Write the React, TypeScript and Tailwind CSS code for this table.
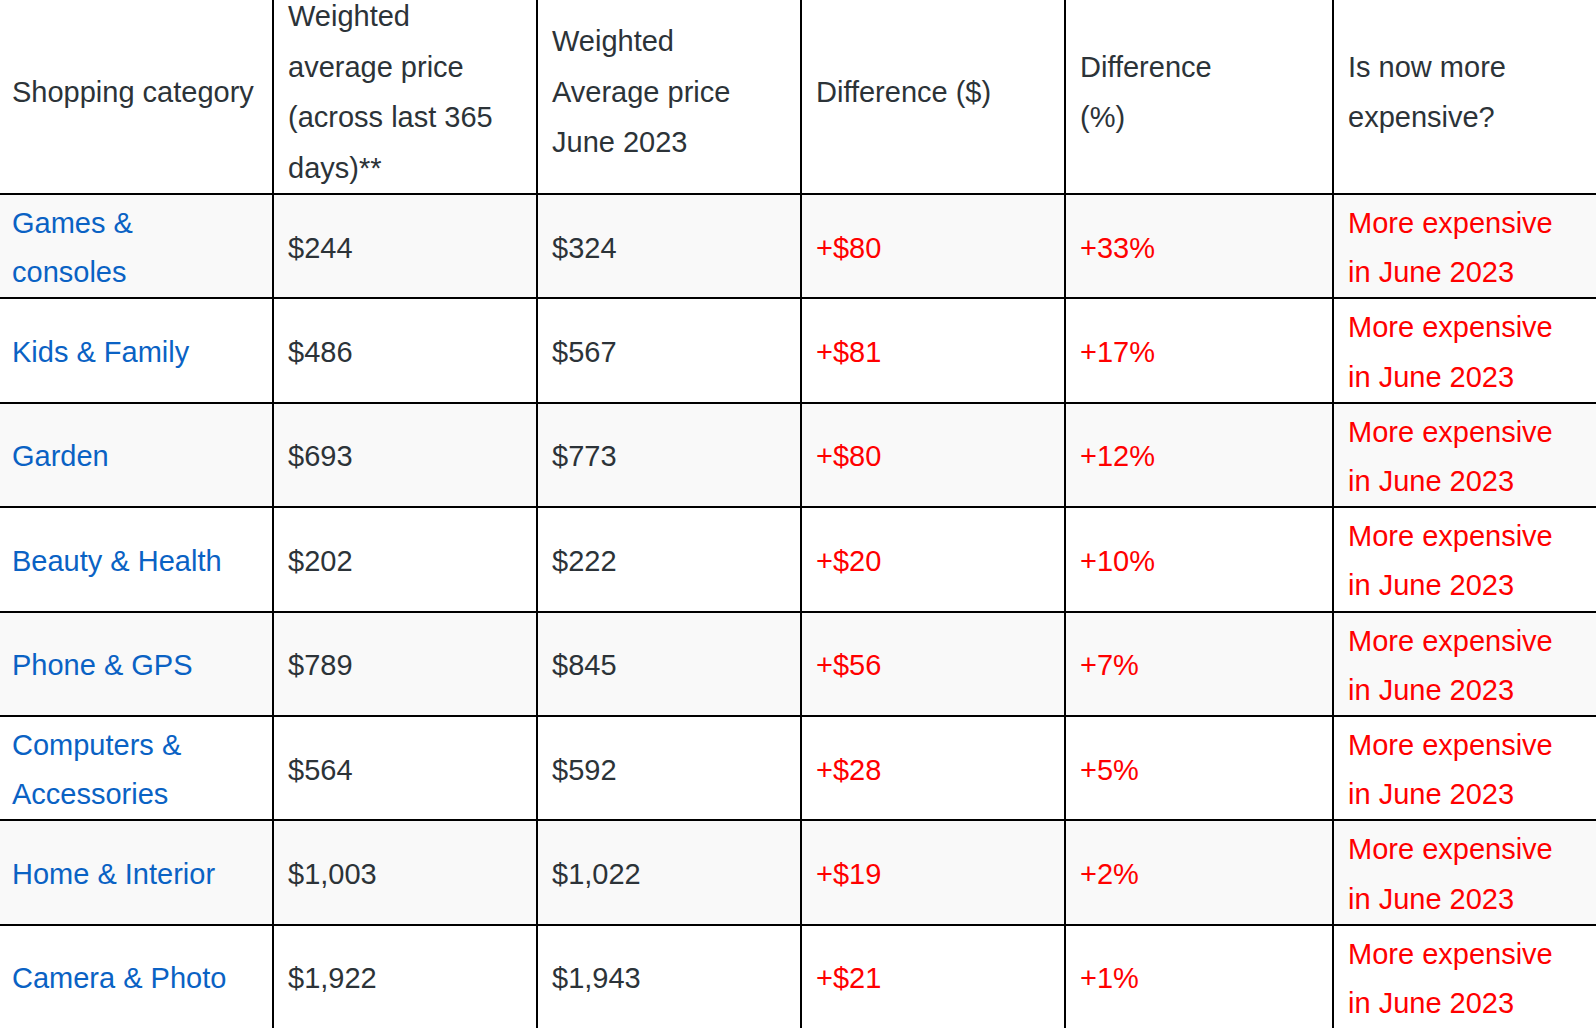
import React from 'react';

const rows = [
  { cat: ['Games &', 'consoles'], avg: '$244', june: '$324', diff: '+$80', pct: '+33%' },
  { cat: ['Kids & Family'], avg: '$486', june: '$567', diff: '+$81', pct: '+17%' },
  { cat: ['Garden'], avg: '$693', june: '$773', diff: '+$80', pct: '+12%' },
  { cat: ['Beauty & Health'], avg: '$202', june: '$222', diff: '+$20', pct: '+10%' },
  { cat: ['Phone & GPS'], avg: '$789', june: '$845', diff: '+$56', pct: '+7%' },
  { cat: ['Computers &', 'Accessories'], avg: '$564', june: '$592', diff: '+$28', pct: '+5%' },
  { cat: ['Home & Interior'], avg: '$1,003', june: '$1,022', diff: '+$19', pct: '+2%' },
  { cat: ['Camera & Photo'], avg: '$1,922', june: '$1,943', diff: '+$21', pct: '+1%' },
];

const lines = (parts: string[]) =>
  parts.map((p, i) => (
    <React.Fragment key={i}>
      {i > 0 && <br />}
      {p}
    </React.Fragment>
  ));

const base = 'border-r-2 border-b-2 border-black px-[14px] pb-0 align-middle text-left whitespace-nowrap';
const th = `${base} pt-[3px] leading-[50.5px] font-normal`;
const td = `${base} pt-[4px] leading-[49.2px]`;

export default function App() {
  return (
    <div className="h-screen w-full overflow-hidden bg-white font-['Liberation_Sans',Arial,sans-serif] text-[29px] text-[#2c3338]">
      <table className="table-fixed border-separate border-spacing-0 w-[1620px] -mt-[12px] -ml-[2px]">
        <colgroup>
          <col className="w-[276px]" />
          <col className="w-[264px]" />
          <col className="w-[264px]" />
          <col className="w-[264px]" />
          <col className="w-[268px]" />
          <col className="w-[284px]" />
        </colgroup>
        <thead>
          <tr>
            <th className={th}>Shopping category</th>
            <th className={th}>{lines(['Weighted', 'average price', '(across last 365', 'days)**'])}</th>
            <th className={th}>{lines(['Weighted', 'Average price', 'June 2023'])}</th>
            <th className={th}>Difference ($)</th>
            <th className={th}>{lines(['Difference', '(%)'])}</th>
            <th className={th}>{lines(['Is now more', 'expensive?'])}</th>
          </tr>
        </thead>
        <tbody>
          {rows.map((r, i) => (
            <tr key={i} className={i % 2 === 0 ? 'bg-[#f9f9f9]' : 'bg-white'}>
              <td className={td}>
                <a href="#" className="text-[#0a62c4]">{lines(r.cat)}</a>
              </td>
              <td className={td}>{r.avg}</td>
              <td className={td}>{r.june}</td>
              <td className={`${td} text-[#ff0000]`}>{r.diff}</td>
              <td className={`${td} text-[#ff0000]`}>{r.pct}</td>
              <td className={`${td} text-[#ff0000]`}>{lines(['More expensive', 'in June 2023'])}</td>
            </tr>
          ))}
        </tbody>
      </table>
    </div>
  );
}
